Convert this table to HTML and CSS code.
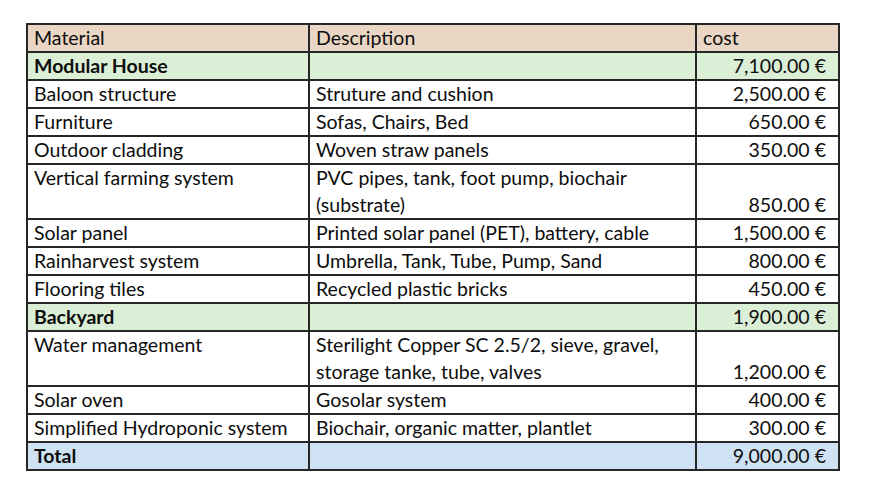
FILE: index.html
```html
<!DOCTYPE html>
<html>
<head>
<meta charset="utf-8">
<link rel="stylesheet" href="styles.css">
</head>
<body>
<table class="budget">
  <colgroup>
    <col class="c-mat">
    <col class="c-desc">
    <col class="c-cost">
  </colgroup>
  <tr class="head"><td>Material</td><td>Description</td><td>cost</td></tr>
  <tr class="group"><td class="b">Modular House</td><td></td><td class="num">7,100.00 €</td></tr>
  <tr><td>Baloon structure</td><td>Struture and cushion</td><td class="num">2,500.00 €</td></tr>
  <tr><td>Furniture</td><td>Sofas, Chairs, Bed</td><td class="num">650.00 €</td></tr>
  <tr><td>Outdoor cladding</td><td>Woven straw panels</td><td class="num">350.00 €</td></tr>
  <tr class="tall"><td>Vertical farming system</td><td>PVC pipes, tank, foot pump, biochair<br>(substrate)</td><td class="num">850.00 €</td></tr>
  <tr><td>Solar panel</td><td>Printed solar panel (PET), battery, cable</td><td class="num">1,500.00 €</td></tr>
  <tr><td>Rainharvest system</td><td>Umbrella, Tank, Tube, Pump, Sand</td><td class="num">800.00 €</td></tr>
  <tr><td>Flooring tiles</td><td>Recycled plastic bricks</td><td class="num">450.00 €</td></tr>
  <tr class="group"><td class="b">Backyard</td><td></td><td class="num">1,900.00 €</td></tr>
  <tr class="tall"><td>Water management</td><td>Sterilight Copper SC 2.5/2, sieve, gravel,<br>storage tanke, tube, valves</td><td class="num">1,200.00 €</td></tr>
  <tr><td>Solar oven</td><td>Gosolar system</td><td class="num">400.00 €</td></tr>
  <tr><td>Simplified Hydroponic system</td><td>Biochair, organic matter, plantlet</td><td class="num">300.00 €</td></tr>
  <tr class="total"><td class="b">Total</td><td></td><td class="num">9,000.00 €</td></tr>
</table>
</body>
</html>
```
FILE: styles.css
```css
html, body {
  margin: 0;
  background: #ffffff;
}
body {
  padding: 23px 0 0 26px;
  font-family: Lato, "Liberation Sans", sans-serif;
  font-size: 19.5px;
  color: #0d0d0d;
}
.budget {
  border-collapse: collapse;
  table-layout: fixed;
  width: 812px;
}
.c-mat { width: 282px; }
.c-desc { width: 387px; }
.c-cost { width: 143px; }
.budget td {
  border: 2px solid #262626;
  padding: 0 12px 0 6px;
  height: 26px;
  line-height: 26px;
  vertical-align: top;
  white-space: nowrap;
  overflow: hidden;
}
.budget .tall td {
  height: 53px;
  line-height: 26.5px;
}
.budget td.num {
  text-align: right;
  vertical-align: bottom;
}
.budget td.b { font-weight: bold; }
.head td { background: #ead6c4; }
.group td { background: #dbeed6; }
.total td { background: #cfe2f3; }
```
